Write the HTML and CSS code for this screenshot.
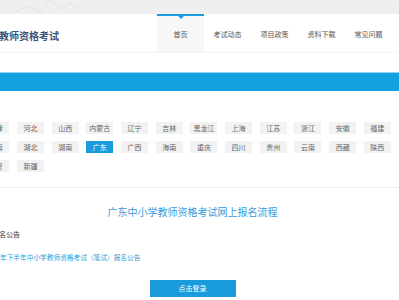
FILE: index.html
```html
<!DOCTYPE html>
<html lang="zh-CN">
<head>
    <meta charset="UTF-8">
    <meta name="viewport" content="width=device-width, initial-scale=1.0">
    <title>教师资格考试</title>
    <link rel="stylesheet" href="styles.css">
</head>
<body>

    <!-- top band -->
    <div class="topband">
        <svg class="hills" width="120" height="14" viewBox="0 0 120 14">
            <polyline points="10,14 28,6 40,12 50,1 62,9 70,3 84,14" fill="none" stroke="#e2e2e2" stroke-width="1"/>
        </svg>
    </div>

    <!-- header -->
    <div class="header">
        <div class="logo">教师资格考试</div>
        <ul class="nav">
            <li class="active">首页</li>
            <li>考试动态</li>
            <li>项目政策</li>
            <li>资料下载</li>
            <li>常见问题</li>
        </ul>
    </div>

    <div class="bluebar"></div>

    <!-- province list -->
    <div class="provinces">
        <span>北京</span><span>天津</span><span>河北</span><span>山西</span><span>内蒙古</span>
        <span>辽宁</span><span>吉林</span><span>黑龙江</span><span>上海</span><span>江苏</span>
        <span>浙江</span><span>安徽</span><span>福建</span><span>江西</span>
        <span>山东</span><span>河南</span><span>湖北</span><span>湖南</span><span class="on">广东</span>
        <span>广西</span><span>海南</span><span>重庆</span><span>四川</span><span>贵州</span>
        <span>云南</span><span>西藏</span><span>陕西</span><span>甘肃</span>
        <span>青海</span><span>宁夏</span><span>新疆</span>
    </div>

    <div class="divider"></div>

    <!-- sign up section -->
    <div class="content">
        <h2 class="title">广东中小学教师资格考试网上报名流程</h2>
        <p class="notice">报名公告</p>
        <p class="notice-link">年下半年中小学教师资格考试（笔试）报名公告</p>
        <div class="btn-wrap">
            <button class="login-btn">点击登录</button>
        </div>
    </div>

</body>
</html>
```

FILE: styles.css
```css
* {
    box-sizing: border-box;
}
body {
    margin: 0;
    font-family: "Noto Sans CJK SC", "Noto Sans", sans-serif;
    background: #fff;
    overflow: hidden;
    width: 399px;
    height: 300px;
}
.topband {
    height: 14px;
    background: #efefef;
}
.hills {
    display: block;
}
.header {
    height: 39px;
    display: flex;
    justify-content: space-between;
    padding-right: 7px;
    border-bottom: 1px solid #f4f4f4;
}
.logo {
    font-size: 10px;
    font-weight: bold;
    color: #3c5277;
    line-height: 39px;
    padding-top: 2px;
    margin-left: -1px;
}
.nav {
    display: flex;
    list-style: none;
    margin: 0;
    padding: 0;
}
.nav li {
    width: 47px;
    text-align: center;
    font-size: 7px;
    color: #555;
    line-height: 37px;
    border-top: 2px solid transparent;
    position: relative;
}
.nav li.active {
    border-top-color: #1a9bdc;
    background: #f8f8f8;
}
.nav li.active::after {
    content: "";
    position: absolute;
    top: 0;
    left: 50%;
    margin-left: -3px;
    border-left: 3px solid transparent;
    border-right: 3px solid transparent;
    border-top: 3px solid #1a9bdc;
}
.bluebar {
    margin-top: 19px;
    height: 19px;
    background: #14a0de;
    border-top: 1px solid #8fd3f2;
}
.provinces {
    margin-top: 31px;
    margin-left: -52.4px;
    display: grid;
    grid-template-columns: repeat(14, 27px);
    column-gap: 7.7px;
    row-gap: 7px;
}
.provinces span {
    height: 12px;
    line-height: 12px;
    text-align: center;
    font-size: 7px;
    color: #666;
    background: #f2f2f2;
    white-space: nowrap;
}
.provinces span.on {
    background: #1a9bdc;
    color: #fff;
}
.divider {
    margin-top: 15px;
    height: 1px;
    background: #f0f0f0;
}
.content {
    margin-left: -18px;
    width: 421px;
}
.title {
    margin: 17px 0 0;
    font-size: 10px;
    font-weight: normal;
    line-height: 14px;
    text-align: center;
    color: #3a9ad9;
}
.notice {
    margin: 10px 0 0;
    padding-left: 10px;
    font-size: 7px;
    line-height: 10px;
    color: #333;
}
.notice-link {
    margin: 13px 0 0;
    padding-left: 18px;
    font-size: 6.7px;
    line-height: 10px;
    color: #2b9fd8;
}
.btn-wrap {
    margin-top: 10px;
    text-align: center;
}
.login-btn {
    width: 86px;
    height: 17px;
    border: none;
    background: #1a9bdc;
    color: #fff;
    font-family: inherit;
    font-size: 7px;
    padding: 0;
}
```
